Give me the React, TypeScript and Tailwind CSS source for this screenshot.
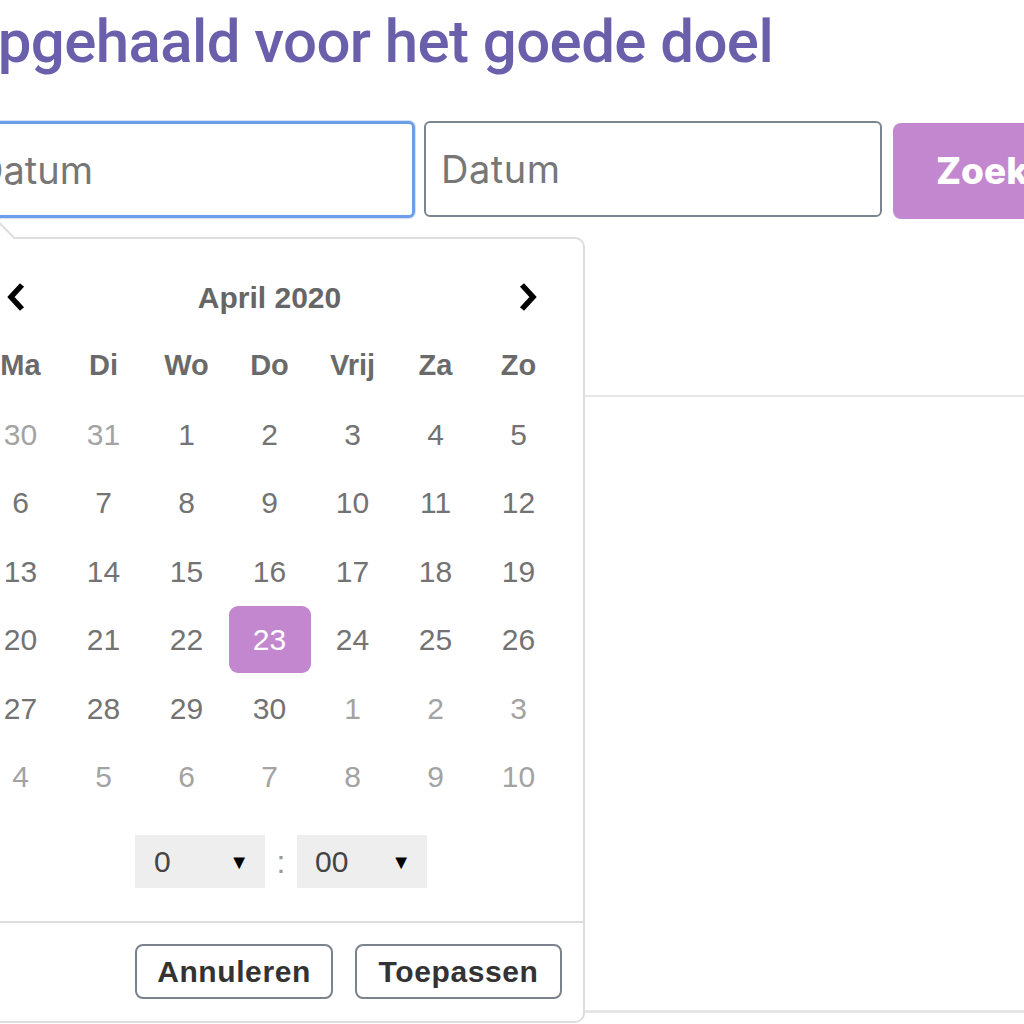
import React from "react";

type Day = { n: number; off: boolean };

const mk = (nums: number[], offIdx: (i: number) => boolean): Day[] =>
  nums.map((n, i) => ({ n, off: offIdx(i) }));

const weeks: Day[][] = [
  mk([30, 31, 1, 2, 3, 4, 5], (i) => i < 2),
  mk([6, 7, 8, 9, 10, 11, 12], () => false),
  mk([13, 14, 15, 16, 17, 18, 19], () => false),
  mk([20, 21, 22, 23, 24, 25, 26], () => false),
  mk([27, 28, 29, 30, 1, 2, 3], (i) => i > 3),
  mk([4, 5, 6, 7, 8, 9, 10], () => true),
];

const dayNames = ["Ma", "Di", "Wo", "Do", "Vrij", "Za", "Zo"];

function ChevronLeft() {
  return (
    <svg width="24" height="32" viewBox="0 0 24 32" className="-translate-x-[4px]">
      <polyline points="17,4 6,16 17,28" fill="none" stroke="#000" strokeWidth="5.5" strokeLinejoin="miter" />
    </svg>
  );
}

function ChevronRight() {
  return (
    <svg width="24" height="32" viewBox="0 0 24 32" className="translate-x-[8px]">
      <polyline points="7,4 18,16 7,28" fill="none" stroke="#000" strokeWidth="5.5" strokeLinejoin="miter" />
    </svg>
  );
}

function Popover() {
  return (
    <div className="absolute left-0 top-[116px] z-10 w-[628px] h-[786px] bg-white border-2 border-[#dddddd] rounded-[10px] font-['Liberation_Sans',Arial,sans-serif]">
      {/* arrow */}
      <div className="absolute left-[22px] top-[-16px] w-[28px] h-[28px] bg-white border-t-2 border-l-2 border-[#dddddd] rotate-45" />
      <div className="pt-[24px] pl-[20px]">
        <div className="grid grid-cols-[repeat(7,83px)]">
          <div className="h-[68.5px] flex items-center justify-center">
            <ChevronLeft />
          </div>
          <div className="col-span-5 h-[68.5px] flex items-center justify-center text-[30px] font-bold text-[#666666]">
            April 2020
          </div>
          <div className="h-[68.5px] flex items-center justify-center">
            <ChevronRight />
          </div>
          {dayNames.map((d) => (
            <div key={d} className="h-[68.5px] flex items-center justify-center text-[29px] font-bold text-[#6a6a6a]">
              {d}
            </div>
          ))}
          {weeks.map((w, wi) =>
            w.map((d, di) => {
              const sel = wi === 3 && di === 3;
              return (
                <div key={`${wi}-${di}`} className="h-[68.5px] flex items-center justify-center">
                  {sel ? (
                    <div className="w-[82px] h-[67px] rounded-[9px] bg-[#c387d0] text-white text-[30px] flex items-center justify-center">
                      {d.n}
                    </div>
                  ) : (
                    <span className={`text-[30px] ${d.off ? "text-[#a3a3a3]" : "text-[#737373]"}`}>{d.n}</span>
                  )}
                </div>
              );
            })
          )}
        </div>
        {/* time */}
        <div className="flex items-center mt-[24px] ml-[156px]">
          <div className="w-[130px] h-[53px] bg-[#eeeeee] flex items-center justify-between pl-[19px] pr-[16px]">
            <span className="text-[30px] text-[#444444]">0</span>
            <span className="text-[20px] text-black">▼</span>
          </div>
          <div className="w-[32px] text-center text-[32px] text-[#999999]">:</div>
          <div className="w-[130px] h-[53px] bg-[#eeeeee] flex items-center justify-between pl-[18px] pr-[16px]">
            <span className="text-[30px] text-[#444444]">00</span>
            <span className="text-[20px] text-black">▼</span>
          </div>
        </div>
      </div>
      <div className="mt-[33px] border-t-2 border-[#dddddd]" />
      <div className="flex justify-end gap-[22px] pr-[21px] pt-[21px]">
        <button className="w-[198px] h-[55px] border-2 border-[#7a838d] rounded-[8px] bg-white text-[30px] font-bold text-[#333333] tracking-[0.6px]">
          Annuleren
        </button>
        <button className="w-[207px] h-[55px] border-2 border-[#7a838d] rounded-[8px] bg-white text-[30px] font-bold text-[#333333] tracking-[0.6px]">
          Toepassen
        </button>
      </div>
    </div>
  );
}

export default function App() {
  return (
    <div className="w-[1024px] h-[1024px] overflow-hidden bg-white relative">
      <div className="ml-[-43px] w-[1300px]">
        <h1 className="pt-[12px] h-[121px] font-['Roboto',sans-serif] font-medium text-[60px] leading-none text-[#6a5fab] tracking-[-0.6px]">
          Opgehaald voor het goede doel
        </h1>
        <div className="flex items-start">
          <div className="relative">
            <input
              readOnly
              placeholder="Datum"
              className="w-[458px] h-[97px] border-[3px] border-[#6d9eea] rounded-[6px] pl-[16px] text-[38px] font-['Inter',sans-serif] placeholder:text-[#777777] outline-none shadow-[0_0_0_1px_rgba(109,158,234,0.3)]"
            />
            <Popover />
          </div>
          <input
            readOnly
            placeholder="Datum"
            className="ml-[9px] w-[458px] h-[96px] border-2 border-[#7b858f] rounded-[6px] pl-[15px] text-[38px] tracking-[0.5px] font-['Inter',sans-serif] placeholder:text-[#777777] outline-none"
          />
          <button className="ml-[11px] mt-[2px] h-[96px] w-[260px] rounded-[8px] bg-[#c387d0] text-white text-[37px] font-extrabold font-['Inter',sans-serif] text-left pl-[43px]">
            Zoeken
          </button>
        </div>
        <div className="mt-[176px] h-[618px] border-t-2 border-b-[3px] border-[#e6e6e6]" />
      </div>
    </div>
  );
}
